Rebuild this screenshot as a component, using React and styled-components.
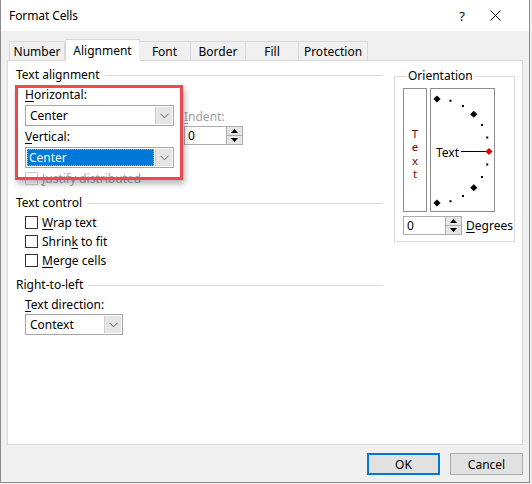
import React from 'react';
import styled, { createGlobalStyle } from 'styled-components';

const GlobalStyle = createGlobalStyle`
  html, body {
    margin: 0;
    padding: 0;
    background: #f0f0f0;
  }
  body {
    font-family: "Noto Sans", "Liberation Sans", sans-serif;
    font-size: 12px;
    color: #000;
  }
`;

const Window = styled.div`
  width: 530px;
  height: 483px;
  box-sizing: border-box;
  background: #f0f0f0;
  border: 1px solid #8c8c8c;
  border-top: none;
  display: flex;
  flex-direction: column;
`;

const TitleBar = styled.div`
  height: 31px;
  background: #fff;
  display: flex;
  align-items: center;
  padding-left: 8px;
  padding-right: 11px;
`;

const Title = styled.div`
  flex: 1;
  font-size: 12px;
  letter-spacing: -0.1px;
`;

const TitleButton = styled.div`
  width: ${(p) => p.w}px;
  height: 31px;
  display: flex;
  align-items: center;
  justify-content: center;
  font-size: 13px;
`;

const TabRow = styled.div`
  display: flex;
  align-items: flex-end;
  height: 22px;
  margin-top: 7px;
  padding-left: 8px;
  position: relative;
  z-index: 1;
`;

const Tab = styled.div`
  width: ${(p) => p.w}px;
  height: ${(p) => (p.active ? 22 : 19)}px;
  box-sizing: border-box;
  border: 1px solid #d9d9d9;
  border-left: ${(p) => (p.first || p.active ? '1px solid #d9d9d9' : 'none')};
  border-bottom: ${(p) => (p.active ? '1px solid #fff' : 'none')};
  background: ${(p) => (p.active ? '#fff' : '#f0f0f0')};
  display: flex;
  align-items: center;
  justify-content: center;
  padding-top: ${(p) => (p.active ? 0 : 1)}px;
  margin-bottom: ${(p) => (p.active ? -1 : 0)}px;
  margin-right: ${(p) => (p.active ? -1 : 0)}px;
  font-size: 12px;
`;

const Panel = styled.div`
  position: relative;
  margin-left: 6px;
  width: 516px;
  height: 385px;
  box-sizing: border-box;
  background: #fff;
  border: 1px solid #d9d9d9;
  display: flex;
  padding: 7px 0 0 8px;
  gap: 11px;
`;

const LeftCol = styled.div`
  width: 367px;
  display: flex;
  flex-direction: column;
`;

const GroupHeader = styled.div`
  display: flex;
  align-items: center;
  height: 14px;
  line-height: 14px;
  gap: 5px;
  margin-top: ${(p) => p.mt || 0}px;
  &::after {
    content: '';
    flex: 1;
    height: 1px;
    background: #dcdcdc;
  }
`;

const Indented = styled.div`
  padding-left: 9px;
  display: flex;
  flex-direction: ${(p) => (p.row ? 'row' : 'column')};
  gap: ${(p) => p.gap || 0}px;
`;

const Label = styled.div`
  height: 14px;
  line-height: 14px;
  margin-top: ${(p) => p.mt || 0}px;
  color: ${(p) => (p.disabled ? '#a0a0a0' : '#000')};
  white-space: nowrap;
`;

const U = styled.span`
  text-decoration: underline;
  text-underline-offset: 2px;
`;

const SelectBox = styled.div`
  width: ${(p) => p.w}px;
  height: 21px;
  margin-top: ${(p) => p.mt || 0}px;
  box-sizing: border-box;
  border: 1px solid #a6a6a6;
  background: #fff;
  display: flex;
`;

const SelectValue = styled.div`
  flex: 1;
  display: flex;
  align-items: center;
  padding-left: 4px;
  ${(p) =>
    p.focused &&
    `
    margin: 1px;
    padding-left: 2px;
    background: #0078d7;
    color: #fff;
    outline: 1px dotted #7fb4e6;
    outline-offset: -1px;
  `}
`;

const DropButton = styled.div`
  width: 16px;
  background: #e5e5e5;
  border-left: 1px solid #cfcfcf;
  margin: 1px 1px 1px 0;
  display: flex;
  align-items: center;
  justify-content: center;
`;

const Chevron = () => (
  <svg width="9" height="6" viewBox="0 0 9 6">
    <path d="M0.5 0.8 L4.5 4.8 L8.5 0.8" fill="none" stroke="#606060" strokeWidth="1" />
  </svg>
);

const Select = ({ w, value, focused, mt }) => (
  <SelectBox w={w} mt={mt}>
    <SelectValue focused={focused}>{value}</SelectValue>
    <DropButton>
      <Chevron />
    </DropButton>
  </SelectBox>
);

const SpinBox = styled.div`
  width: ${(p) => p.w}px;
  height: 19px;
  margin-top: ${(p) => p.mt || 0}px;
  box-sizing: border-box;
  border: 1px solid #adadad;
  background: #fff;
  display: flex;
`;

const SpinValue = styled.div`
  flex: 1;
  padding-left: 3px;
  line-height: 17px;
`;

const SpinButtons = styled.div`
  width: 15px;
  display: flex;
  flex-direction: column;
  border-left: 1px solid #adadad;
`;

const SpinButton = styled.div`
  flex: 1;
  background: #e6e6e6;
  border-top: ${(p) => (p.bottom ? '1px solid #adadad' : 'none')};
  display: flex;
  align-items: center;
  justify-content: center;
`;

const Tri = ({ down }) => (
  <svg width="7" height="4" viewBox="0 0 7 4">
    <path d={down ? 'M0 0 L7 0 L3.5 4 Z' : 'M0 4 L7 4 L3.5 0 Z'} fill="#000" />
  </svg>
);

const Spinner = ({ w, mt }) => (
  <SpinBox w={w} mt={mt}>
    <SpinValue>0</SpinValue>
    <SpinButtons>
      <SpinButton>
        <Tri />
      </SpinButton>
      <SpinButton bottom>
        <Tri down />
      </SpinButton>
    </SpinButtons>
  </SpinBox>
);

const CheckRow = styled.div`
  height: 19px;
  display: flex;
  align-items: center;
  gap: 4px;
  margin-top: ${(p) => p.mt || 0}px;
  color: ${(p) => (p.disabled ? '#a0a0a0' : '#000')};
`;

const Box = styled.div`
  width: 13px;
  height: 13px;
  box-sizing: border-box;
  border: 1px solid ${(p) => (p.disabled ? '#cccccc' : '#333')};
  background: #fff;
`;

const Highlight = styled.div`
  position: absolute;
  left: 7px;
  top: 24px;
  width: 168px;
  height: 95px;
  box-sizing: border-box;
  border: 3px solid #ef4850;
  box-shadow: 2px 4px 6px rgba(0, 0, 0, 0.28);
  pointer-events: none;
`;

const Orientation = styled.fieldset`
  margin: 1px 0 0 0;
  padding: 5px 0 4px 8px;
  width: 121px;
  height: 173px;
  box-sizing: border-box;
  border: 1px solid #dcdcdc;
  align-self: flex-start;
`;

const Legend = styled.legend`
  padding: 0 1px;
  margin-left: 4px;
  line-height: 14px;
  font-size: 12px;
`;

const DialRow = styled.div`
  display: flex;
  gap: 3px;
`;

const VerticalText = styled.div`
  width: 24px;
  height: 124px;
  box-sizing: border-box;
  border: 1px solid #8c8c8c;
  display: flex;
  flex-direction: column;
  align-items: center;
  justify-content: center;
  padding-top: 7px;
  color: #7a0a0a;
  font-size: 11.5px;
  line-height: 13.4px;
`;

const DialBox = styled.div`
  width: 65px;
  height: 124px;
  box-sizing: border-box;
  border: 1px solid #8c8c8c;
  display: flex;
`;

const DegreesRow = styled.div`
  display: flex;
  align-items: center;
  gap: 4px;
  margin-top: 4px;
`;

const Diamond = ({ x, y, color }) => (
  <path d={`M${x} ${y - 3.6} L${x + 3.6} ${y} L${x} ${y + 3.6} L${x - 3.6} ${y} Z`} fill={color || '#000'} />
);

const Dial = () => {
  const cx = 6;
  const cy = 62;
  const r = 52;
  const pt = (deg) => {
    const a = (deg * Math.PI) / 180;
    return [cx + r * Math.cos(a), cy - r * Math.sin(a)];
  };
  const big = [90, 45, -45, -90];
  const small = [75, 60, 30, 15, -15, -30, -60, -75];
  return (
    <svg width="63" height="122" viewBox="0 0 63 122">
      {big.map((d) => {
        const [x, y] = pt(d);
        return <Diamond key={d} x={x} y={y} />;
      })}
      {small.map((d) => {
        const [x, y] = pt(d);
        return <rect key={d} x={x - 1} y={y - 1} width="2" height="2" fill="#000" />;
      })}
      <text x="5" y="67.5" fontSize="12" fontFamily='"Noto Sans", "Liberation Sans", sans-serif' fill="#000">
        Text
      </text>
      <line x1="30" y1="62.5" x2="55" y2="62.5" stroke="#000" strokeWidth="1" />
      <Diamond x={58} y={62.5} color="#e00000" />
    </svg>
  );
};

const Footer = styled.div`
  display: flex;
  justify-content: flex-end;
  gap: 10px;
  padding: 8px 6px 0 0;
`;

const Button = styled.div`
  width: 73px;
  height: 22px;
  box-sizing: border-box;
  background: #e1e1e1;
  border: ${(p) => (p.primary ? '2px solid #0078d7' : '1px solid #adadad')};
  display: flex;
  align-items: center;
  justify-content: center;
`;

const tabs = [
  { name: 'Number', w: 56 },
  { name: 'Alignment', w: 75 },
  { name: 'Font', w: 52 },
  { name: 'Border', w: 55 },
  { name: 'Fill', w: 53 },
  { name: 'Protection', w: 69 },
];

export default function App() {
  return (
    <>
      <GlobalStyle />
      <Window>
        <TitleBar>
          <Title>Format Cells</Title>
          <TitleButton w={20}>?</TitleButton>
          <TitleButton w={46}>
            <svg width="11" height="11" viewBox="0 0 11 11">
              <path d="M0.5 0.5 L10.5 10.5 M10.5 0.5 L0.5 10.5" stroke="#000" strokeWidth="1" />
            </svg>
          </TitleButton>
        </TitleBar>

        <TabRow>
          {tabs.map((t, i) => (
            <Tab key={t.name} w={t.w} active={t.name === 'Alignment'} first={i === 0}>
              {t.name}
            </Tab>
          ))}
        </TabRow>

        <Panel>
          <LeftCol>
            <GroupHeader>Text alignment</GroupHeader>
            <Indented row gap={10}>
              <div>
                <Label mt={6}>
                  <U>H</U>orizontal:
                </Label>
                <Select w={149} value="Center" mt={3} />
                <Label mt={4}>
                  <U>V</U>ertical:
                </Label>
                <Select w={149} value="Center" focused mt={3} />
              </div>
              <div>
                <Label mt={28} disabled>
                  <U>I</U>ndent:
                </Label>
                <Spinner w={59} mt={2} />
              </div>
            </Indented>
            <Indented>
              <CheckRow disabled mt={1}>
                <Box disabled />
                <span>
                  <U>J</U>ustify distributed
                </span>
              </CheckRow>
            </Indented>

            <GroupHeader mt={8}>Text control</GroupHeader>
            <Indented>
              <CheckRow mt={3}>
                <Box />
                <span>
                  <U>W</U>rap text
                </span>
              </CheckRow>
              <CheckRow>
                <Box />
                <span>
                  Shrin<U>k</U> to fit
                </span>
              </CheckRow>
              <CheckRow>
                <Box />
                <span>
                  <U>M</U>erge cells
                </span>
              </CheckRow>
            </Indented>

            <GroupHeader mt={8}>Right-to-left</GroupHeader>
            <Indented>
              <Label mt={6}>
                <U>T</U>ext direction:
              </Label>
              <Select w={98} value="Context" mt={2} />
            </Indented>
          </LeftCol>

          <Orientation>
            <Legend>Orientation</Legend>
            <DialRow>
              <VerticalText>
                <span>T</span>
                <span>e</span>
                <span>x</span>
                <span>t</span>
              </VerticalText>
              <DialBox>
                <Dial />
              </DialBox>
            </DialRow>
            <DegreesRow>
              <Spinner w={59} />
              <span>
                <U>D</U>egrees
              </span>
            </DegreesRow>
          </Orientation>

          <Highlight />
        </Panel>

        <Footer>
          <Button primary>OK</Button>
          <Button>Cancel</Button>
        </Footer>
      </Window>
    </>
  );
}
